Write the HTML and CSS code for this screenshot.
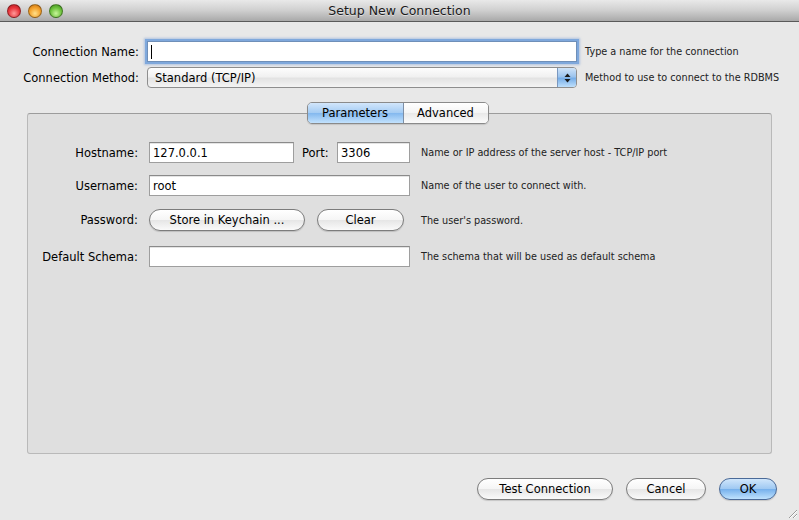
FILE: index.html
```html
<!DOCTYPE html>
<html>
<head>
<meta charset="utf-8">
<link rel="stylesheet" href="styles.css">
<title>Setup New Connection</title>
</head>
<body>
<div class="window">
  <div class="titlebar">
    <div class="lights">
      <span class="light red"></span>
      <span class="light yellow"></span>
      <span class="light green"></span>
    </div>
    <div class="title">Setup New Connection</div>
    <div></div>
  </div>

  <div class="topform">
    <label class="lbl">Connection Name:</label>
    <div class="field"><div class="input focus"><span class="caret"></span></div></div>
    <div class="help">Type a name for the connection</div>

    <label class="lbl">Connection Method:</label>
    <div class="field">
      <div class="popup">
        <span class="popup-text">Standard (TCP/IP)</span>
        <span class="popup-arrows">
          <svg width="9" height="12" viewBox="0 0 9 12"><path d="M4.5 1.5 L7.5 5 L1.5 5 Z" fill="#1a1a1a"/><path d="M4.5 10.5 L7.5 7 L1.5 7 Z" fill="#1a1a1a"/></svg>
        </span>
      </div>
    </div>
    <div class="help">Method to use to connect to the RDBMS</div>
  </div>

  <div class="tabview">
    <div class="segmented">
      <span class="seg selected">Parameters</span>
      <span class="seg">Advanced</span>
    </div>
    <div class="box">
      <div class="row r1">
        <label class="lbl2">Hostname:</label>
        <div class="fields">
          <div class="input host">127.0.0.1</div>
          <span class="portlbl">Port:</span>
          <div class="input port">3306</div>
        </div>
        <div class="help2">Name or IP address of the server host - TCP/IP port</div>
      </div>
      <div class="row r2">
        <label class="lbl2">Username:</label>
        <div class="fields"><div class="input wide">root</div></div>
        <div class="help2">Name of the user to connect with.</div>
      </div>
      <div class="row r3">
        <label class="lbl2">Password:</label>
        <div class="fields">
          <span class="btn keychain">Store in Keychain ...</span>
          <span class="btn clear">Clear</span>
        </div>
        <div class="help2">The user's password.</div>
      </div>
      <div class="row r4">
        <label class="lbl2">Default Schema:</label>
        <div class="fields"><div class="input wide"></div></div>
        <div class="help2">The schema that will be used as default schema</div>
      </div>
    </div>
  </div>

  <div class="buttons">
    <span class="btn test">Test Connection</span>
    <span class="btn cancel">Cancel</span>
    <span class="btn ok">OK</span>
  </div>
  <div class="grip">
    <svg width="12" height="12" viewBox="0 0 12 12"><path d="M11 3 L3 11 M11 7 L7 11" stroke="#9a9a9a" stroke-width="1"/><path d="M11 4 L4 11 M11 8 L8 11" stroke="#ffffff" stroke-width="1"/></svg>
  </div>
</div>
</body>
</html>
```

FILE: styles.css
```css
* { box-sizing: border-box; }
html, body { margin: 0; padding: 0; }
body {
  width: 799px;
  height: 520px;
  overflow: hidden;
  font-family: "DejaVu Sans", "Lucida Grande", sans-serif;
  font-size: 11.5px;
  color: #000;
  background: #e8e8e8;
}
.window {
  position: relative;
  width: 799px;
  height: 520px;
  background: #e8e8e8;
}
.titlebar {
  height: 22px;
  display: grid;
  grid-template-columns: 1fr auto 1fr;
  align-items: center;
  background: linear-gradient(#e9e9e9, #cfcfcf 50%, #a9a9a9);
  border-bottom: 1px solid #5a5a5a;
}
.lights {
  display: flex;
  gap: 7px;
  padding-left: 7px;
  padding-top: 1px;
}
.light {
  width: 14px;
  height: 14px;
  border-radius: 50%;
  border: 1px solid rgba(0,0,0,0.35);
}
.red { background: radial-gradient(circle at 50% 70%, #ff9a9a 0%, #e8343a 55%, #b01c22 100%); }
.yellow { background: radial-gradient(circle at 50% 70%, #ffe08a 0%, #f3a02a 55%, #c26e10 100%); }
.green { background: radial-gradient(circle at 50% 70%, #c8f59a 0%, #6cc13c 55%, #3d8a1c 100%); }
.title {
  font-size: 12.5px;
  color: #1a1a1a;
  text-shadow: 0 1px 0 rgba(255,255,255,0.5);
}

.topform {
  display: grid;
  grid-template-columns: 139px 430px auto;
  column-gap: 8px;
  row-gap: 5px;
  padding-top: 19px;
  padding-left: 0;
  align-items: center;
}
.lbl {
  text-align: right;
  color: #000;
}
.help {
  font-size: 9.7px;
  color: #222;
}
.input {
  height: 21px;
  background: #fff;
  border: 1px solid #9e9e9e;
  border-top-color: #8a8a8a;
  box-shadow: inset 0 1px 0 #e4e4e4;
  padding: 2px 3px 0;
  line-height: 16px;
  font-size: 11.5px;
}
.input.focus {
  border-color: #6f8fb8;
  box-shadow: 0 0 0 2px #7fa8dc, 0 0 2px 3px rgba(120,160,215,0.5);
  position: relative;
}
.caret {
  display: block;
  width: 1px;
  height: 14px;
  background: #000;
  margin-top: 1px;
}
.popup {
  height: 21px;
  border: 1px solid #8e8e8e;
  border-radius: 4px;
  background: linear-gradient(#fdfdfd, #f1f1f1 45%, #e3e3e3 55%, #f4f4f4);
  display: flex;
  align-items: center;
  justify-content: space-between;
  overflow: hidden;
}
.popup-text { padding-left: 7px; }
.popup-arrows {
  width: 19px;
  height: 100%;
  display: flex;
  align-items: center;
  justify-content: center;
  background: linear-gradient(#cfe3f8, #9cc4ee 45%, #77aee8 55%, #bfe0fc);
  border-left: 1px solid #7a98c0;
}

.tabview {
  margin: 14px 27px 0;
  display: flex;
  flex-direction: column;
  align-items: center;
}
.segmented {
  position: relative;
  z-index: 1;
  display: flex;
  height: 22px;
  border: 1px solid #8a8a8a;
  border-radius: 5px;
  overflow: hidden;
  margin-left: -4px;
  box-shadow: 0 1px 1px rgba(0,0,0,0.12);
}
.seg {
  display: flex;
  align-items: center;
  justify-content: center;
  background: linear-gradient(#ffffff, #f4f4f4 50%, #e9e9e9 52%, #fbfbfb);
}
.seg.selected {
  width: 96px;
  background: linear-gradient(#d2e6fb, #a3cbf3 50%, #84b9ef 52%, #c3e2fd);
  border-right: 1px solid #7d8fa6;
}
.seg:not(.selected) { width: 84px; }
.box {
  align-self: stretch;
  margin-top: -11px;
  height: 341px;
  background: #dfdfdf;
  border: 1px solid #b9b9b9;
  border-top-color: #9c9c9c;
  border-radius: 3px;
  padding-top: 28px;
}
.row {
  display: grid;
  grid-template-columns: 110px 261px auto;
  column-gap: 11px;
  align-items: center;
}
.r2 { margin-top: 12px; }
.r3 { margin-top: 13px; }
.r4 { margin-top: 15px; }
.lbl2 { text-align: right; }
.fields {
  display: flex;
  align-items: center;
}
.input.host { width: 145px; }
.portlbl { margin-left: 8px; width: 35px; }
.input.port { width: 73px; }
.input.wide { width: 261px; }
.help2 { font-size: 9.7px; color: #222; }

.btn {
  display: inline-flex;
  align-items: center;
  justify-content: center;
  height: 22px;
  border: 1px solid #7c7c7c;
  border-radius: 11px;
  background: linear-gradient(#ffffff, #f5f5f5 50%, #e6e6e6 52%, #fafafa);
  box-shadow: 0 1px 1px rgba(0,0,0,0.15);
}
.keychain { width: 156px; }
.clear { width: 87px; margin-left: 12px; }

.buttons {
  display: flex;
  justify-content: flex-end;
  gap: 13px;
  padding-right: 22px;
  margin-top: 24px;
}
.test { width: 136px; }
.cancel { width: 80px; }
.ok {
  width: 58px;
  border-color: #4a6a98;
  background: linear-gradient(#d0e6fb, #9ec8f2 50%, #77b1ec 52%, #bfe2fe);
}
.grip {
  position: absolute;
  right: 1px;
  bottom: 1px;
  width: 12px;
  height: 12px;
}
```
